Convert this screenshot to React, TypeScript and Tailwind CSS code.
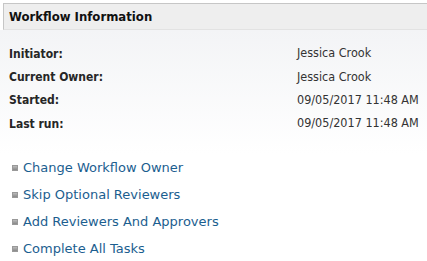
import React from 'react';

const details = [
  { label: 'Initiator:', value: 'Jessica Crook' },
  { label: 'Current Owner:', value: 'Jessica Crook' },
  { label: 'Started:', value: '09/05/2017 11:48 AM' },
  { label: 'Last run:', value: '09/05/2017 11:48 AM' },
];

const actions = [
  'Change Workflow Owner',
  'Skip Optional Reviewers',
  'Add Reviewers And Approvers',
  'Complete All Tasks',
];

const tahoma = { fontFamily: '"DejaVu Sans Condensed", "DejaVu Sans", sans-serif' };

export default function App() {
  return (
    <div className="w-[427px] h-[261px] bg-white overflow-hidden pt-[3px] pl-[3px]">
      {/* Header */}
      <div
        className="h-[27px] bg-[#eeeeee] border-t border-l border-[#c6c6c6] border-b border-b-[#e2e2e2] flex items-center pl-[5px] text-[13px] font-bold text-[#111]"
        style={tahoma}
      >
        Workflow Information
      </div>

      {/* Details */}
      <div className="-ml-[3px] bg-gradient-to-b from-[#f3f4f6] to-white pt-[12px] pb-[19px]">
        {details.map((d) => (
          <div key={d.label} className="flex items-center h-[23.3px] pl-[9px]" style={tahoma}>
            <span className="w-[288px] text-[12px] font-bold text-[#262626]">{d.label}</span>
            <span className="text-[12.5px] text-[#333]">{d.value}</span>
          </div>
        ))}
      </div>

      {/* Actions */}
      <div className="flex flex-col -ml-[3px] pl-[12px]">
        {actions.map((a) => (
          <div key={a} className="flex items-center h-[27px] gap-[5px]">
            <span className="w-[6px] h-[6px] bg-gradient-to-b from-[#bbb] to-[#888] border border-[#999]" />
            <a
              className="text-[13px] text-[#1b5e8f] cursor-pointer"
              style={{ fontFamily: '"DejaVu Sans", Verdana, sans-serif' }}
            >
              {a}
            </a>
          </div>
        ))}
      </div>
    </div>
  );
}
